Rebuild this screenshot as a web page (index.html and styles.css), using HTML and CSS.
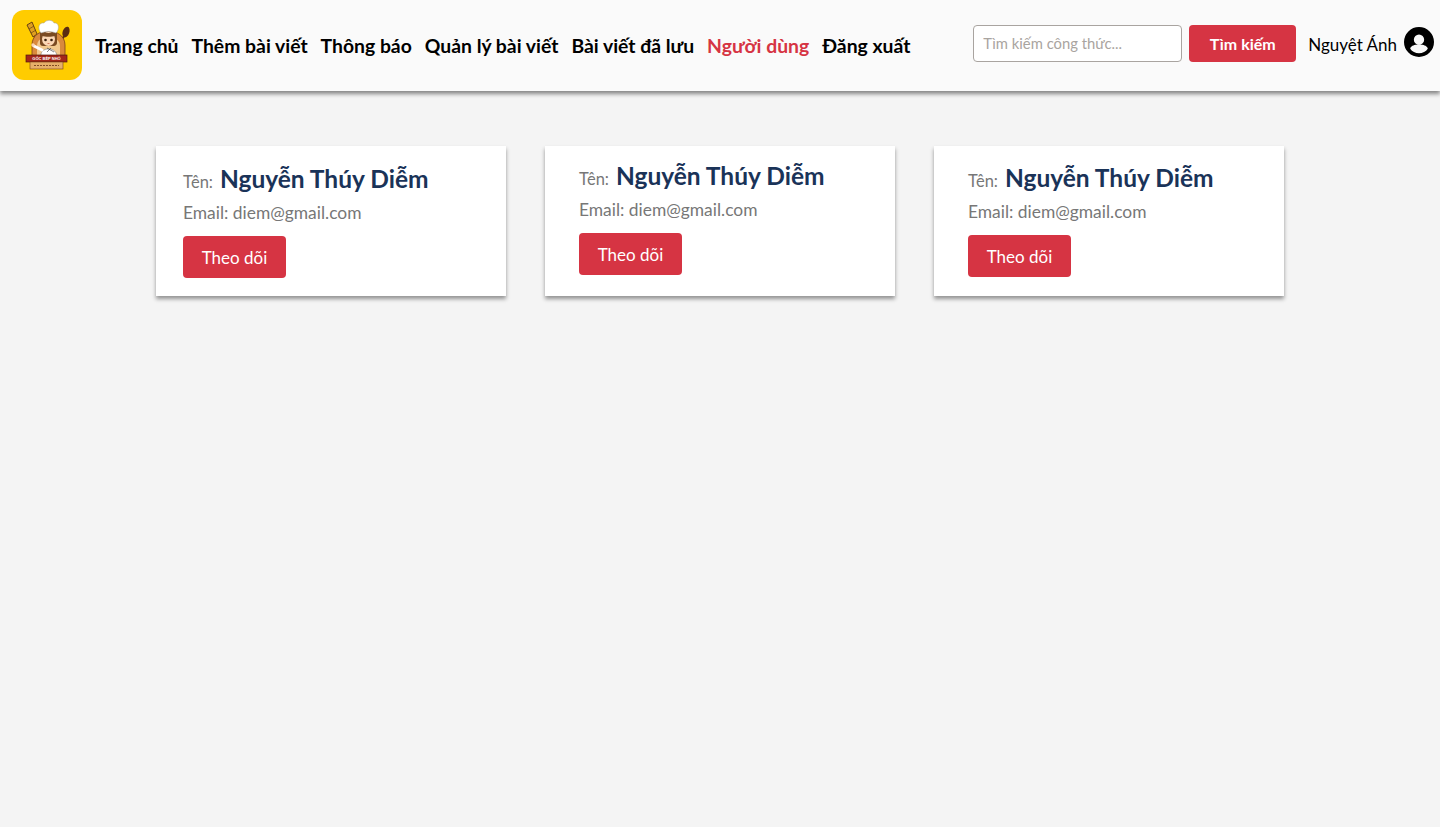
FILE: index.html
```html
<!DOCTYPE html>
<html lang="vi">
<head>
  <meta charset="UTF-8">
  <meta name="viewport" content="width=device-width, initial-scale=1.0">
  <title>Người dùng</title>
  <link rel="stylesheet" href="styles.css">
</head>
<body>
  <header class="topbar">
    <a class="logo" href="#">
      <svg viewBox="0 0 70 70" width="70" height="70" aria-label="Góc Bếp Nhỏ">
        <!-- whisk and spoon -->
        <path d="M24 30 19 20" stroke="#6a3413" stroke-width="1.500"/>
        <path d="M15 15 20 12 25 24 21 27Z" fill="#e0a020" stroke="#6a4310" stroke-width="1"/>
        <path d="M17 19 22 16M19 23 24 20" stroke="#6a4310" stroke-width=".7"/>
        <path d="M48 34 53 24" stroke="#5a2c12" stroke-width="2"/>
        <ellipse cx="54" cy="22" rx="3.300" ry="5.500" fill="#5a2c12" transform="rotate(20 54 22)"/>
        <!-- arch behind the chef -->
        <path d="M20 47V35C20 26 27 21 36 21S53 26 53 35V47Z" fill="#d98a3d" stroke="#7a4015" stroke-width=".8"/>
        <path d="M25 47V36C25 30 30 27 36 27S48 30 48 36V47Z" fill="#f2c98f"/>
        <!-- chef -->
        <path d="M29 46C28 37 44 36 45 46Z" fill="#fff" stroke="#666" stroke-width=".5"/>
        <path d="M30 40 22 36" stroke="#fff" stroke-width="3" stroke-linecap="round"/>
        <circle cx="21" cy="35" r="1.700" fill="#fbd7b5"/>
        <path d="M35 38 42 42M39 38 35 42" stroke="#333" stroke-width=".6"/>
        <path d="M28 22H45V33C45 35 43 36 42 36H31C29 36 28 35 28 33Z" fill="#7a4a22"/>
        <ellipse cx="36.500" cy="29" rx="6.500" ry="7" fill="#fbd7b5"/>
        <path d="M30 26C33 27 40 27 43 26V23H30Z" fill="#7a4a22"/>
        <circle cx="33.500" cy="30" r="1.300" fill="#3a2010"/>
        <circle cx="39.500" cy="30" r="1.300" fill="#3a2010"/>
        <path d="M35.500 33.500H37.500" stroke="#c0503a" stroke-width=".7"/>
        <path d="M29 23C25 18 27 12 32 13C35 9 41 10 42 13C47 12 48 19 44 23C39 21 34 21 29 23Z" fill="#fff" stroke="#a0a0a0" stroke-width=".5"/>
        <!-- sign -->
        <rect x="14" y="45" width="41" height="7" fill="#a3261a" stroke="#4e170e" stroke-width=".7"/>
        <text x="34.500" y="50.300" class="logo-sign">GÓC BẾP NHỎ</text>
        <rect x="18" y="52" width="33" height="7" fill="#e6b06a" stroke="#7a4015" stroke-width=".6"/>
        <path d="M22 55.500H47" stroke="#6a3413" stroke-width=".8" stroke-dasharray="2 1"/>
      </svg>
    </a>
    <nav class="main-nav">
      <a href="#">Trang chủ</a>
      <a href="#">Thêm bài viết</a>
      <a href="#">Thông báo</a>
      <a href="#">Quản lý bài viết</a>
      <a href="#">Bài viết đã lưu</a>
      <a href="#" class="active">Người dùng</a>
      <a href="#">Đăng xuất</a>
    </nav>
    <form class="search">
      <input type="text" placeholder="Tìm kiếm công thức...">
      <button type="button" class="search-btn">Tìm kiếm</button>
    </form>
    <div class="account">
      <span>Nguyệt Ánh</span>
      <svg viewBox="0 0 512 512" width="30" height="30">
        <path d="M256 0a256 256 0 1 0 0 512A256 256 0 1 0 256 0zM256 128a88 88 0 1 1 0 176 88 88 0 1 1 0-176zM256 448c-62 0-117-31-150-78 8-38 58-66 110-66h80c52 0 102 28 110 66-33 47-88 78-150 78z" fill="#000"/>
      </svg>
    </div>
  </header>

  <main class="user-grid">
    <div class="user-card first">
      <div class="user-name"><span class="label">Tên:</span><strong>Nguyễn Thúy Diễm</strong></div>
      <p class="user-email">Email: diem@gmail.com</p>
      <button type="button" class="follow-btn">Theo dõi</button>
    </div>
    <div class="user-card second">
      <div class="user-name"><span class="label">Tên:</span><strong>Nguyễn Thúy Diễm</strong></div>
      <p class="user-email">Email: diem@gmail.com</p>
      <button type="button" class="follow-btn">Theo dõi</button>
    </div>
    <div class="user-card third">
      <div class="user-name"><span class="label">Tên:</span><strong>Nguyễn Thúy Diễm</strong></div>
      <p class="user-email">Email: diem@gmail.com</p>
      <button type="button" class="follow-btn">Theo dõi</button>
    </div>
  </main>
</body>
</html>
```

FILE: styles.css
```css
body {
  margin: 0;
  min-height: 827px;
  background-color: #f4f4f4;
  font-family: Lato, "Noto Sans", sans-serif;
  color: #000;
}

.topbar {
  display: flex;
  align-items: center;
  box-sizing: border-box;
  height: 91px;
  padding: 0 6px 1px 12px;
  background-color: #fafafa;
  box-shadow: 0 3px 4px rgba(0, 0, 0, 0.45);
}

.logo {
  display: block;
  width: 70px;
  height: 70px;
  border-radius: 12px;
  background-color: #ffcc00;
  overflow: hidden;
}

.logo-sign {
  font-family: "Liberation Sans", sans-serif;
  font-size: 4px;
  font-weight: bold;
  fill: #fff;
  text-anchor: middle;
}

.main-nav {
  display: flex;
  gap: 13px;
  margin-left: 13px;
}

.main-nav a {
  color: #000;
  font-size: 19.35px;
  font-weight: 700;
  text-decoration: none;
}

.main-nav a.active {
  color: #d63443;
}

.search {
  display: flex;
  gap: 7px;
  margin-left: auto;
  margin-top: -4px;
}

.search input {
  box-sizing: border-box;
  width: 209px;
  height: 37px;
  padding: 0 9px;
  border: 1px solid #a9a4a0;
  border-radius: 4px;
  background-color: #fff;
  font-family: inherit;
  font-size: 14.8px;
}

.search input::placeholder {
  color: #a9a4a0;
}

.search-btn {
  width: 107px;
  height: 37px;
  border: none;
  border-radius: 4px;
  background-color: #d63443;
  color: white;
  font-family: inherit;
  font-size: 16px;
  font-weight: 700;
}

.account {
  display: flex;
  align-items: center;
  gap: 7px;
  margin-left: 12px;
  margin-top: -6px;
  font-size: 17px;
}

.account span {
  padding-top: 5px;
}

.user-grid {
  display: flex;
  justify-content: center;
  gap: 39px;
  padding-top: 55px;
}

.user-card {
  box-sizing: border-box;
  width: 350px;
  height: 150px;
  background-color: white;
  box-shadow: 0 3px 4px rgba(0, 0, 0, 0.4);
}

.user-card.first {
  padding: 17px 27px 0;
}

.user-card.second {
  padding: 14px 34px 0;
}

.user-card.third {
  padding: 16px 34px 0;
}

.user-name {
  display: flex;
  align-items: baseline;
  gap: 7px;
  box-sizing: border-box;
  height: 35px;
  padding-top: 1px;
}

.label {
  color: #777;
  font-size: 16.5px;
}

.user-name strong {
  color: #1a3358;
  font-size: 24.5px;
  font-weight: 700;
}

.user-email {
  margin: 5px 0 13px;
  color: #777;
  font-size: 17.4px;
  line-height: 20px;
}

.follow-btn {
  width: 103px;
  height: 42px;
  border: none;
  border-radius: 4px;
  background-color: #d63443;
  color: white;
  font-family: inherit;
  font-size: 17px;
}
```
